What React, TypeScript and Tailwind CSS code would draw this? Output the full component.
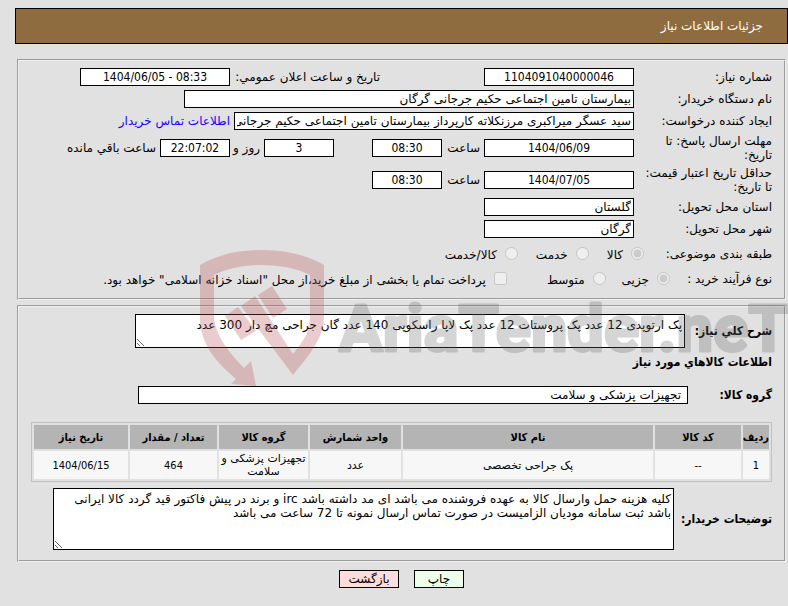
import React from "react";

const box = "h-[18px] border border-black bg-white px-0.5 text-xs leading-4 outline-none";
const condensed = "font-['DejaVu_Sans_Condensed','DejaVu_Sans',sans-serif]";

type FieldProps = {
  label: string;
  value: string;
  className: string;
};

const Field = ({ label, value, className }: FieldProps) => (
  <input
    type="text"
    dir="auto"
    aria-label={label}
    defaultValue={value}
    readOnly
    className={`${box} ${className}`}
  />
);

// centered dates, hours and codes
const NumberField = ({ className, ...rest }: FieldProps) => (
  <Field {...rest} className={`text-center ${condensed} ${className}`} />
);

const Row = ({
  id,
  label,
  tall,
  children,
}: {
  id: string;
  label: string;
  tall?: boolean;
  children: React.ReactNode;
}) => (
  <div
    role="group"
    aria-labelledby={id}
    className={`flex items-center ${tall ? "h-8" : "h-[22px]"}`}
  >
    <span id={id} className="w-[138px] shrink-0 pl-2 leading-[14px]">
      {label}
    </span>
    <div className="flex min-w-0 grow items-center gap-1">{children}</div>
  </div>
);

const Choice = ({
  type,
  name,
  label,
  checked,
}: {
  type: "radio" | "checkbox";
  name: string;
  label: string;
  checked?: boolean;
}) => (
  <label className="flex items-center gap-2">
    <input
      type={type}
      name={name}
      defaultChecked={checked}
      disabled
      className="size-[13px] shrink-0"
    />
    <span className="pt-0.5">{label}</span>
  </label>
);

const Watermark = () => (
  <svg
    aria-hidden="true"
    width="588"
    height="140"
    viewBox="200 248 588 140"
    className="pointer-events-none absolute top-[248px] left-[200px] opacity-[.27] [direction:ltr]"
  >
    <g fill="#b9484c">
      <path d="M200 265Q226 250 262 250Q298 250 324 265V316C324 338 310 354 293 375L241 306L255 296L293 354C304 340 310 332 310 317V275Q290 265 262 265Q234 265 214 275V316C215 336 229 352 244 368L251 361L256 386L231 384L236 379C216 362 200 344 200 318Z" />
      <path d="M225 316L238 307L256 331L241 340Z" />
      <path d="M258 295L272 286L287 309L273 318Z" />
    </g>
    <text
      x="339"
      y="351"
      fill="#666"
      stroke="#666"
      strokeWidth="3"
      strokeLinejoin="round"
      fontSize="65"
      fontWeight="700"
      fontFamily="Roboto, 'Liberation Sans', sans-serif"
    >
      AriaTender.neT
    </text>
  </svg>
);

const columns = [
  { title: "ردیف", value: "1", width: "w-[26px]", numeric: true },
  { title: "کد کالا", value: "--", width: "w-[86px]", numeric: true },
  { title: "نام کالا", value: "پک جراحی تخصصی", width: "w-auto" },
  { title: "واحد شمارش", value: "عدد", width: "w-[91px]" },
  { title: "گروه کالا", value: "تجهیزات پزشکی و سلامت", width: "w-[89px]" },
  { title: "تعداد / مقدار", value: "464", width: "w-[87px]", numeric: true },
  { title: "تاریخ نیاز", value: "1404/06/15", width: "w-[94px]", numeric: true },
];

const panel = "mx-[2px] border-2 border-[#f0f0f0] pr-3 [border-style:groove]";

export default function App() {
  return (
    <div
      dir="rtl"
      className="relative min-h-screen bg-[#e1e1e1] pt-2 pl-[15px] font-['DejaVu_Sans',sans-serif] text-xs text-black"
    >
      <h1 className="flex h-9 items-center border border-black bg-[#8f6c40] pr-6 text-white">
        جزئیات اطلاعات نیاز
      </h1>

      <section className={`mt-[15px] pt-[5px] pb-[7px] ${panel}`}>
        <Row id="number" label="شماره نیاز:">
          <NumberField label="شماره نیاز" value="1104091040000046" className="w-[150px]" />
          <span className="mr-[100px] w-[146px] whitespace-nowrap">
            تاریخ و ساعت اعلان عمومي:
          </span>
          <NumberField
            label="تاریخ و ساعت اعلان عمومي"
            value="1404/06/05 - 08:33"
            className="w-[150px]"
          />
        </Row>
        <Row id="buyer" label="نام دستگاه خریدار:">
          <Field
            label="نام دستگاه خریدار"
            value="بیمارستان تامین اجتماعی حکیم جرجانی گرگان"
            className="w-[450px]"
          />
        </Row>
        <Row id="creator" label="ایجاد کننده درخواست:">
          <Field
            label="ایجاد کننده درخواست"
            value="سید عسگر میراکبری مرزنکلاته کارپرداز بیمارستان تامین اجتماعی حکیم جرجانی"
            className="w-[400px]"
          />
          <a href="#contact" className="whitespace-nowrap text-[#1a00ff]">
            اطلاعات تماس خریدار
          </a>
        </Row>
        <Row id="deadline" label="مهلت ارسال پاسخ: تا تاریخ:" tall>
          <NumberField label="تاریخ پاسخ" value="1404/06/09" className="w-[150px]" />
          <span className="w-[34px]">ساعت</span>
          <NumberField label="ساعت پاسخ" value="08:30" className="w-[70px]" />
          <NumberField label="روز" value="3" className="mr-[34px] w-[70px]" />
          <span className="w-[26px] whitespace-nowrap">روز و</span>
          <NumberField label="زمان باقي مانده" value="22:07:02" className="w-[70px] bg-[#fffff0]" />
          <span className="whitespace-nowrap">ساعت باقي مانده</span>
        </Row>
        <Row id="validity" label="حداقل تاریخ اعتبار قیمت: تا تاریخ:" tall>
          <NumberField label="تاریخ اعتبار" value="1404/07/05" className="w-[150px]" />
          <span className="w-[34px]">ساعت</span>
          <NumberField label="ساعت اعتبار" value="08:30" className="w-[70px]" />
        </Row>
        <Row id="province" label="استان محل تحویل:">
          <Field label="استان محل تحویل" value="گلستان" className="w-[150px]" />
        </Row>
        <Row id="city" label="شهر محل تحویل:">
          <Field label="شهر محل تحویل" value="گرگان" className="w-[150px]" />
        </Row>
        <div
          role="radiogroup"
          aria-label="طبقه بندی موضوعی"
          className="mt-px flex h-[25px] items-center gap-[18px]"
        >
          <span className="w-[110px] whitespace-nowrap">طبقه بندی موضوعی:</span>
          <Choice type="radio" name="subject" label="کالا" checked />
          <Choice type="radio" name="subject" label="خدمت" />
          <Choice type="radio" name="subject" label="کالا/خدمت" />
        </div>
        <div
          role="group"
          aria-label="نوع فرآیند خرید"
          className="flex h-[25px] items-center whitespace-nowrap"
        >
          <span className="w-[102px]">نوع فرآیند خرید :</span>
          <Choice type="radio" name="process" label="جزیی" checked />
          <span className="w-4" />
          <Choice type="radio" name="process" label="متوسط" />
          <span className="w-10" />
          <Choice
            type="checkbox"
            name="treasury"
            label={'پرداخت تمام یا بخشی از مبلغ خرید،از محل "اسناد خزانه اسلامی" خواهد بود.'}
          />
        </div>
      </section>

      <section className={`mt-[5px] pt-[7px] pb-[10px] ${panel}`}>
        <div className="flex items-center">
          <label
            htmlFor="summary"
            className={`w-[87px] whitespace-nowrap font-bold ${condensed}`}
          >
            شرح کلي نیاز:
          </label>
          <textarea
            id="summary"
            readOnly
            defaultValue="پک ارتوپدی 12 عدد پک پروستات 12 عدد پک لاپا راسکوپی 140 عدد گان جراحی مچ دار 300 عدد"
            className="h-[34px] w-[550px] border border-black bg-white px-0.5 py-[3px] leading-[14px]"
          />
        </div>
        <h2 className={`mt-1.5 font-bold ${condensed}`}>اطلاعات کالاهاي مورد نیاز</h2>
        <div className="mt-4 flex items-center">
          <label htmlFor="group" className={`w-[84px] font-bold ${condensed}`}>
            گروه کالا:
          </label>
          <input
            id="group"
            type="text"
            readOnly
            defaultValue="تجهیزات پزشکی و سلامت"
            className="h-[18px] w-[550px] border border-black bg-white px-1.5"
          />
        </div>
        <table className="mt-[18px] w-[741px] table-fixed border-separate border-spacing-[2px] border border-[#c0c0c0] text-center text-[11px] leading-[13px]">
          <thead>
            <tr className="h-6 bg-[#b4b4b4]">
              {columns.map((c) => (
                <th key={c.title} className={`${c.width} whitespace-nowrap p-0 ${condensed}`}>
                  {c.title}
                </th>
              ))}
            </tr>
          </thead>
          <tbody>
            <tr className="h-7 bg-[#f7f7f7]">
              {columns.map((c) => (
                <td key={c.title} className={`p-0 ${c.numeric ? condensed : ""}`}>
                  {c.value}
                </td>
              ))}
            </tr>
          </tbody>
        </table>
        <div className="mt-1.5 flex items-center">
          <label
            htmlFor="notes"
            className={`w-[98px] whitespace-nowrap font-bold ${condensed}`}
          >
            توضیحات خریدار:
          </label>
          <textarea
            id="notes"
            readOnly
            defaultValue="کلیه هزینه حمل وارسال کالا به عهده فروشنده می باشد ای مد داشته باشد irc و برند در پیش فاکتور قید گردد کالا ایرانی باشد ثبت سامانه مودیان الزامیست در صورت تماس ارسال نمونه تا 72 ساعت می باشد"
            className="h-[62px] w-[621px] border border-black bg-white px-0.5 py-[3px] leading-[14px]"
          />
        </div>
      </section>

      <div className="mt-2 flex justify-center gap-[15px]">
        <button
          type="button"
          className="h-[18px] w-[50px] border border-black bg-[#ebffeb] leading-4"
        >
          چاپ
        </button>
        <button
          type="button"
          className="h-[18px] w-[60px] border border-black bg-[#ffdcdc] leading-4"
        >
          بازگشت
        </button>
      </div>

      <Watermark />
    </div>
  );
}
